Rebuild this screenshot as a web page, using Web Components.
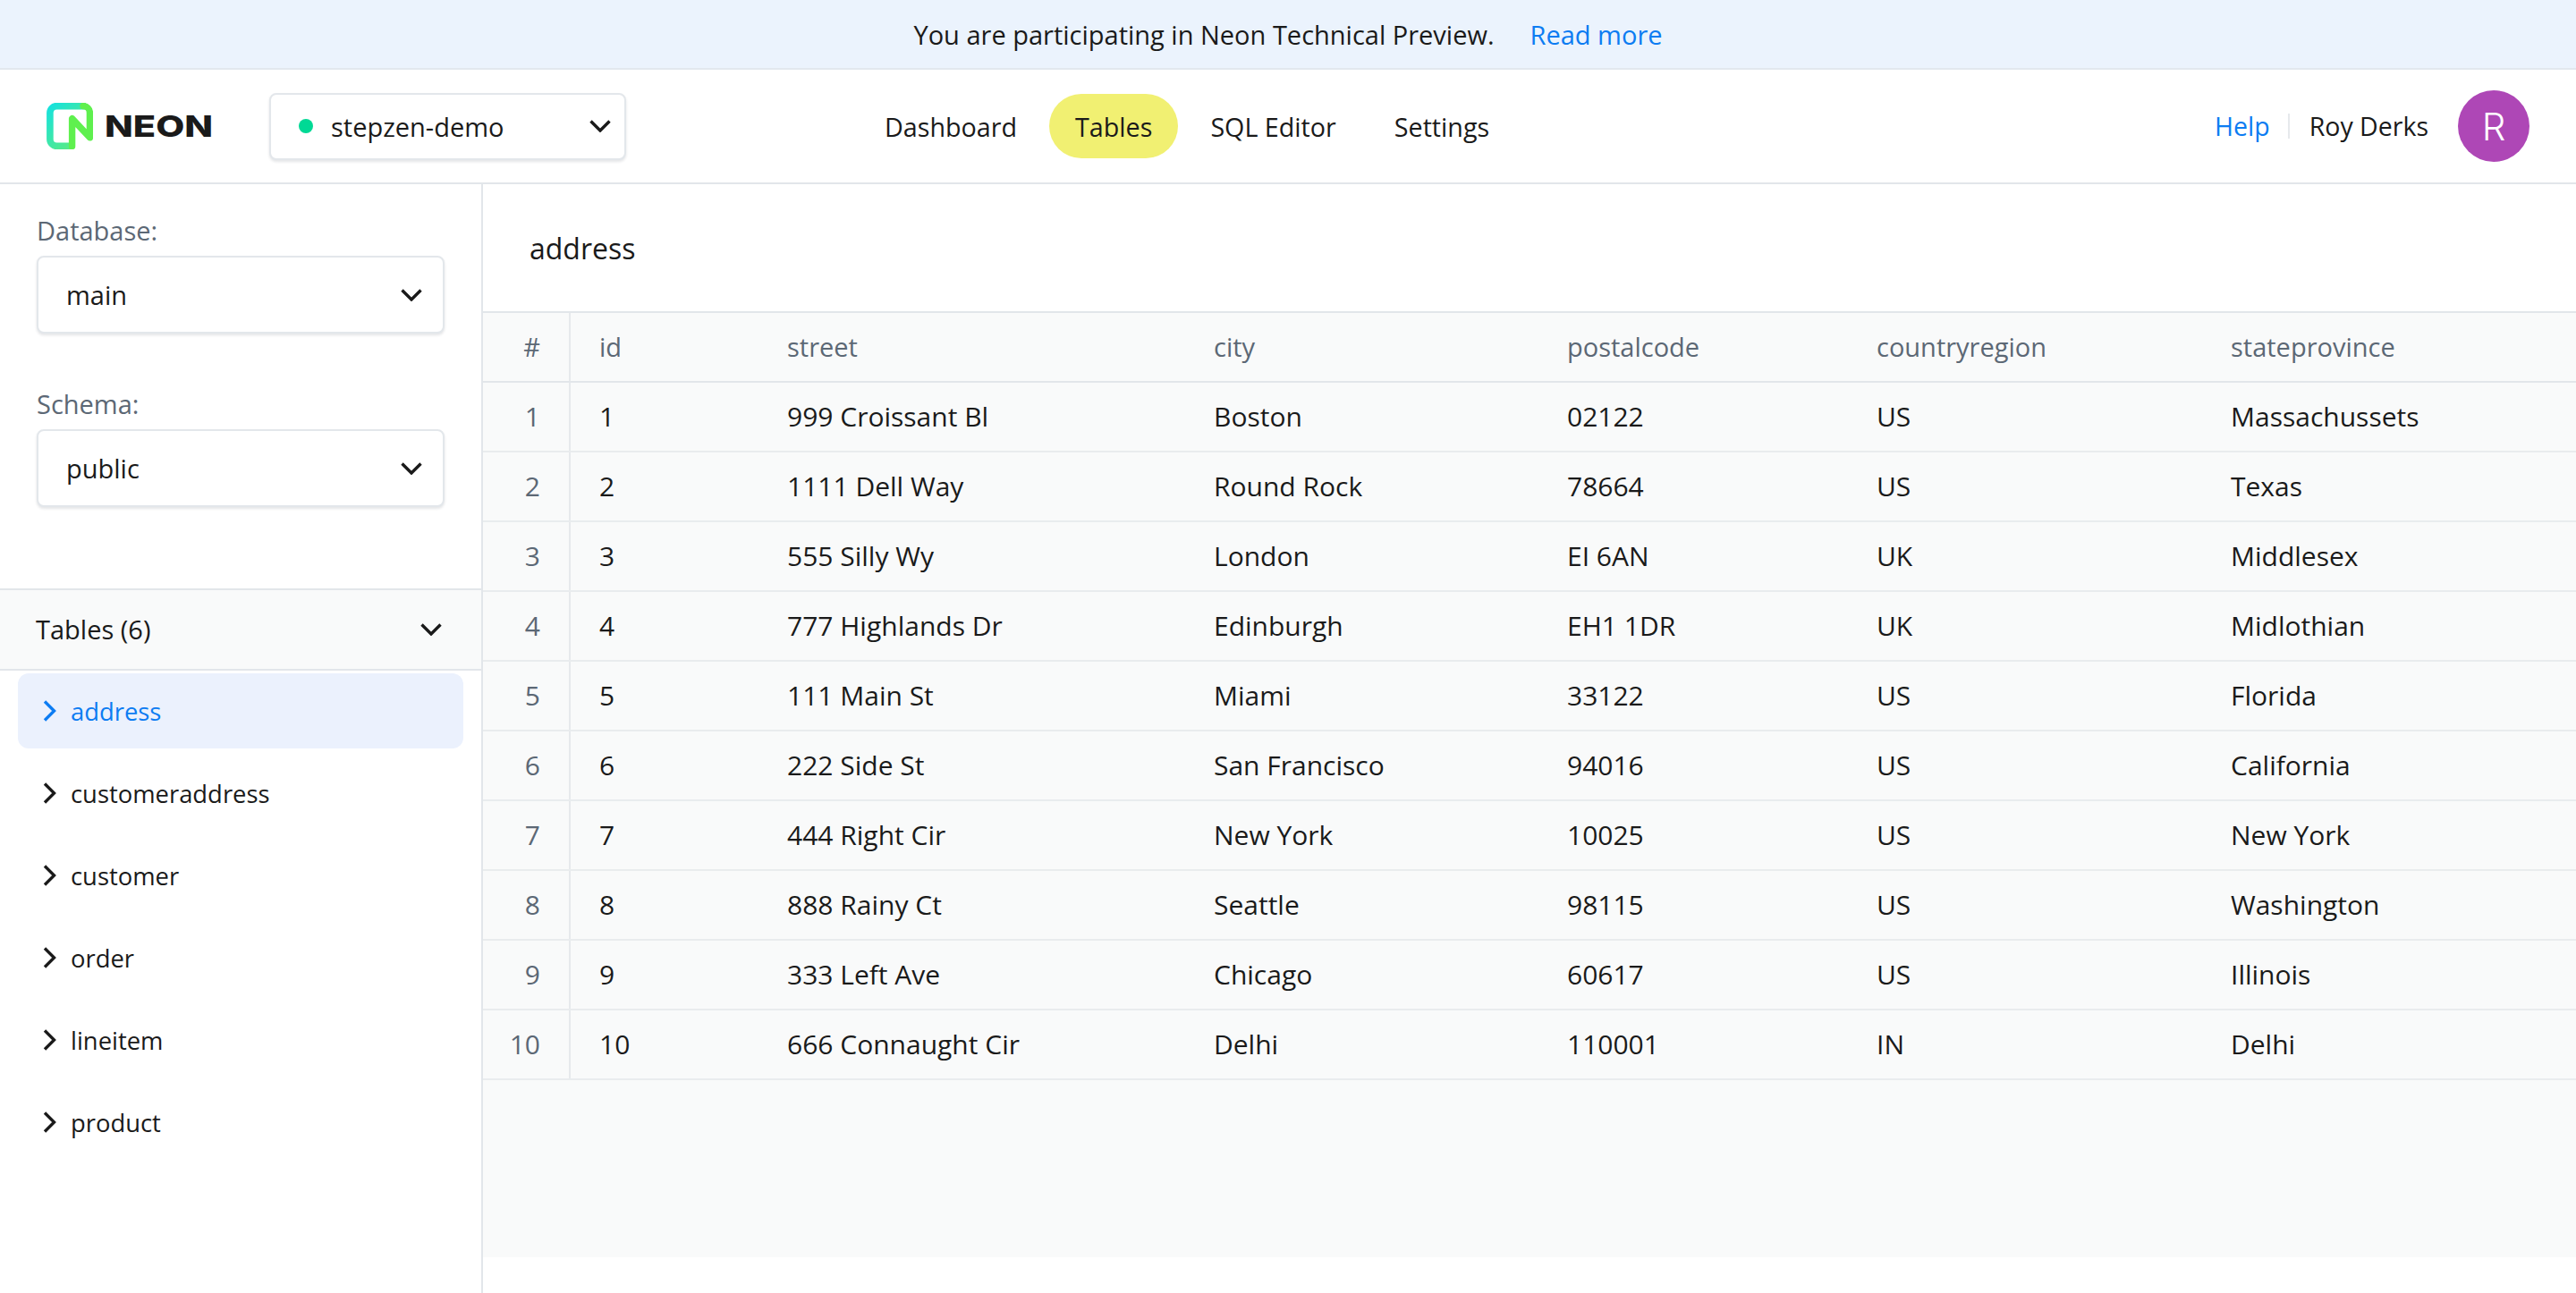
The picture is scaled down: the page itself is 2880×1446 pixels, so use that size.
<!DOCTYPE html>
<html lang="en">
<head>
<meta charset="utf-8">
<title>Neon - Tables</title>
<style>
	html, body { margin: 0; height: 100%; background: #fff; }
	body { font-family: "Open Sans", "Noto Sans", sans-serif; font-size: 29px; color: #1a1a1a; overflow: hidden; }
</style>
</head>
<body>
<neon-app></neon-app>
<script>
const CHEVRON_DOWN = `<svg width="24" height="14" viewBox="0 0 24 14" fill="none"><path d="M1.5 1.5 12 12 22.5 1.5" stroke="currentColor" stroke-width="3.4"/></svg>`;
const CHEVRON_RIGHT = `<svg width="15" height="24" viewBox="0 0 15 24" fill="none"><path d="M2 1.5 12.5 12 2 22.5" stroke="currentColor" stroke-width="3.4"/></svg>`;

class NeonBanner extends HTMLElement {
	constructor() {
		super();
		this.attachShadow({mode: 'open'}).innerHTML = `
		<style>
			:host { display: flex; justify-content: center; align-items: center; gap: 40px; height: 76px; background: #ebf3fd; border-bottom: 2px solid #e2e8ee; font-weight: 500; }
			a { color: #0c7cf2; text-decoration: none; }
		</style>
		<span>You are participating in Neon Technical Preview.</span>
		<a>Read more</a>`;
	}
}
customElements.define('neon-banner', NeonBanner);

class NeonLogo extends HTMLElement {
	constructor() {
		super();
		this.attachShadow({mode: 'open'}).innerHTML = `
		<style>
			:host { display: flex; align-items: center; gap: 13px; width: 249px; }
			span { font-family: Inter, sans-serif; font-weight: 800; font-size: 33px; line-height: 1; display: inline-block; transform: scaleX(1.26); transform-origin: left center; color: #1a1a1a; }
			svg { flex: none; }
		</style>
		<svg width="52" height="52" viewBox="0 0 52 52" fill="none">
			<defs>
				<linearGradient id="ring" x1="0" y1="0" x2="0.9" y2="1">
					<stop offset="0" stop-color="#17e2dc"/>
					<stop offset="1" stop-color="#62ec78"/>
				</linearGradient>
			</defs>
			<path d="M29 48.4H11.5A7.6 7.6 0 0 1 3.9 40.8V11.2A7.6 7.6 0 0 1 11.5 3.6H44" stroke="url(#ring)" stroke-width="7.6"/>
			<path d="M41 3.6A7.4 7.4 0 0 1 48.4 11V38.8L28.6 17.6V48.4" stroke="#5ff04e" stroke-width="7.4" stroke-linecap="round" stroke-linejoin="round"/>
		</svg>
		<span>NEON</span>`;
	}
}
customElements.define('neon-logo', NeonLogo);

class NeonSelect extends HTMLElement {
	constructor() {
		super();
		this.attachShadow({mode: 'open'}).innerHTML = `
		<style>
			:host { display: flex; align-items: center; justify-content: space-between; box-sizing: border-box; background: #fff; border: 2px solid #e3e7eb; border-radius: 8px; box-shadow: 0 2px 3px rgba(30,45,60,.12); padding: 0 23px 0 31px; height: 87px; font-weight: 500; }
			:host([compact]) { height: 75px; padding-right: 15px; }
			.label { display: flex; align-items: center; gap: 20px; }
			svg { display: block; color: #1a1a1a; }
		</style>
		<span class="label"><slot name="dot"></slot><slot></slot></span>
		${CHEVRON_DOWN}`;
	}
}
customElements.define('neon-select', NeonSelect);

class NavLink extends HTMLElement {
	constructor() {
		super();
		this.attachShadow({mode: 'open'}).innerHTML = `
		<style>
			:host { display: flex; align-items: center; height: 72px; padding: 0 29px; border-radius: 36px; font-size: 28.7px; font-weight: 500; }
			:host([active]) { background: #f1f072; }
		</style>
		<slot></slot>`;
	}
}
customElements.define('nav-link', NavLink);

class NeonHeader extends HTMLElement {
	constructor() {
		super();
		this.attachShadow({mode: 'open'}).innerHTML = `
		<style>
			:host { display: flex; align-items: center; height: 126px; padding: 0 52px; background: #fff; border-bottom: 2px solid #e2e6ea; }
			neon-select { width: 399px; }
			.dot { width: 16px; height: 16px; border-radius: 50%; background: #00d995; }
			nav { display: flex; gap: 7px; margin-left: 260px; }
			.user { display: flex; align-items: center; margin-left: auto; font-size: 28.5px; font-weight: 500; }
			.help { color: #0c7cf2; padding-right: 20px; border-right: 2px solid #e6e9ec; line-height: 28px; height: 28px; }
			.name { margin-left: 22px; }
			.avatar { display: flex; align-items: center; justify-content: center; width: 80px; height: 80px; margin-left: 33px; border-radius: 50%; background: #ae47b6; color: #fff; font-family: Inter, sans-serif; font-weight: 300; font-size: 42px; }
		</style>
		<neon-logo></neon-logo>
		<neon-select compact><span class="dot" slot="dot"></span>stepzen-demo</neon-select>
		<nav>
			<nav-link>Dashboard</nav-link>
			<nav-link active>Tables</nav-link>
			<nav-link>SQL Editor</nav-link>
			<nav-link>Settings</nav-link>
		</nav>
		<div class="user">
			<span class="help">Help</span>
			<span class="name">Roy Derks</span>
			<span class="avatar">R</span>
		</div>`;
	}
}
customElements.define('neon-header', NeonHeader);

class TableItem extends HTMLElement {
	constructor() {
		super();
		this.attachShadow({mode: 'open'}).innerHTML = `
		<style>
			:host { display: flex; align-items: center; gap: 16px; height: 84px; padding-left: 28px; border-radius: 12px; font-weight: 500; font-size: 27.4px; }
			:host([active]) { background: #ebf1fd; color: #0c7cf2; }
			svg { display: block; }
		</style>
		${CHEVRON_RIGHT}<slot></slot>`;
	}
}
customElements.define('table-item', TableItem);

class SideBar extends HTMLElement {
	constructor() {
		super();
		this.attachShadow({mode: 'open'}).innerHTML = `
		<style>
			:host { display: flex; flex-direction: column; flex: none; box-sizing: border-box; width: 540px; background: #fff; border-right: 2px solid #e2e6ea; }
			.pickers { padding: 32px 41px 91px 41px; }
			label { display: block; height: 40px; line-height: 40px; margin-bottom: 8px; color: #5c6875; font-weight: 500; }
			neon-select + label { margin-top: 59px; }
			.head { display: flex; align-items: center; justify-content: space-between; box-sizing: border-box; height: 92px; padding: 0 44px 2px 40px; background: #f9fafa; border: solid #e2e6ea; border-width: 2px 0; font-weight: 500; }
			.head svg { display: block; margin-top: 2px; }
			.list { display: flex; flex-direction: column; gap: 8px; padding: 3px 20px; }
		</style>
		<div class="pickers">
			<label>Database:</label>
			<neon-select>main</neon-select>
			<label>Schema:</label>
			<neon-select>public</neon-select>
		</div>
		<div class="head"><span>Tables (6)</span>${CHEVRON_DOWN}</div>
		<div class="list">
			<table-item active>address</table-item>
			<table-item>customeraddress</table-item>
			<table-item>customer</table-item>
			<table-item>order</table-item>
			<table-item>lineitem</table-item>
			<table-item>product</table-item>
		</div>`;
	}
}
customElements.define('side-bar', SideBar);

class TableRow extends HTMLElement {
	constructor() {
		super();
		this.attachShadow({mode: 'open'}).innerHTML = `
		<style>
			:host { display: grid; grid-template-columns: 98px 210px 477px 395px 346px 396px 1fr; box-sizing: border-box; height: 78px; border-bottom: 2px solid #e9ecee; font-size: 30px; font-weight: 400; }
			:host([head]) { border-bottom-color: #e2e6ea; font-size: 29px; font-weight: 500; color: #5c6875; }
		</style>
		<slot></slot>`;
	}
}
customElements.define('table-row', TableRow);

class TableCell extends HTMLElement {
	constructor() {
		super();
		this.attachShadow({mode: 'open'}).innerHTML = `
		<style>
			:host { display: flex; align-items: center; padding: 0 0 2px 32px; white-space: nowrap; }
			:host([num]) { justify-content: flex-end; padding: 0 32px 2px 0; border-right: 2px solid #e6e9ec; color: #5c6875; font-weight: 500; }
		</style>
		<slot></slot>`;
	}
}
customElements.define('table-cell', TableCell);

const COLUMNS = ['id', 'street', 'city', 'postalcode', 'countryregion', 'stateprovince'];
const ADDRESSES = [
	['1', '999 Croissant Bl', 'Boston', '02122', 'US', 'Massachussets'],
	['2', '1111 Dell Way', 'Round Rock', '78664', 'US', 'Texas'],
	['3', '555 Silly Wy', 'London', 'EI 6AN', 'UK', 'Middlesex'],
	['4', '777 Highlands Dr', 'Edinburgh', 'EH1 1DR', 'UK', 'Midlothian'],
	['5', '111 Main St', 'Miami', '33122', 'US', 'Florida'],
	['6', '222 Side St', 'San Francisco', '94016', 'US', 'California'],
	['7', '444 Right Cir', 'New York', '10025', 'US', 'New York'],
	['8', '888 Rainy Ct', 'Seattle', '98115', 'US', 'Washington'],
	['9', '333 Left Ave', 'Chicago', '60617', 'US', 'Illinois'],
	['10', '666 Connaught Cir', 'Delhi', '110001', 'IN', 'Delhi']
];

class DataTable extends HTMLElement {
	constructor() {
		super();
		const row = (num, cells, head) => `<table-row ${head ? 'head' : ''}><table-cell num>${num}</table-cell>${cells.map(c => `<table-cell>${c}</table-cell>`).join('')}</table-row>`;
		this.attachShadow({mode: 'open'}).innerHTML = `
		<style>
			:host { display: block; box-sizing: border-box; height: 1058px; background: #f9fafa; border-top: 2px solid #e2e6ea; }
		</style>
		${row('#', COLUMNS, true)}
		${ADDRESSES.map((a, i) => row(i + 1, a)).join('')}`;
	}
}
customElements.define('data-table', DataTable);

class NeonApp extends HTMLElement {
	constructor() {
		super();
		this.attachShadow({mode: 'open'}).innerHTML = `
		<style>
			:host { display: flex; flex-direction: column; height: 1446px; }
			.body { display: flex; flex: 1; min-height: 0; }
			main { flex: 1; min-width: 0; }
			h1 { display: flex; align-items: center; box-sizing: border-box; height: 142px; margin: 0; padding-left: 52px; font-size: 32px; font-weight: 500; }
		</style>
		<neon-banner></neon-banner>
		<neon-header></neon-header>
		<div class="body">
			<side-bar></side-bar>
			<main>
				<h1>address</h1>
				<data-table></data-table>
			</main>
		</div>`;
	}
}
customElements.define('neon-app', NeonApp);
</script>
</body>
</html>
